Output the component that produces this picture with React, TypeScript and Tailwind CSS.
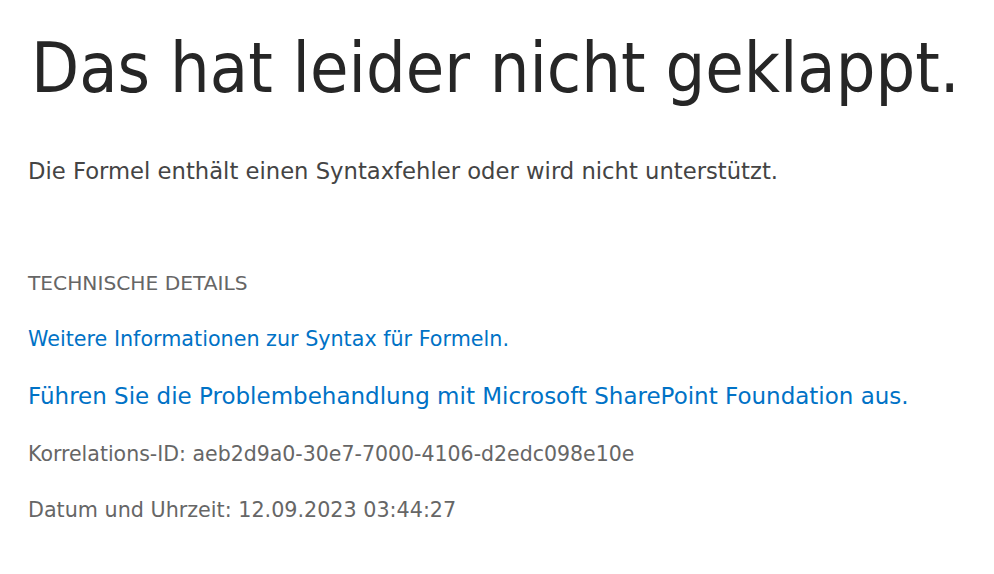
export default function App() {
  return (
    <div
      className="min-h-screen w-full bg-white pl-[28px] pt-[33px]"
      style={{ fontFamily: '"DejaVu Sans", sans-serif' }}
    >
      <h1
        className="ml-[3px] text-[69.6px] leading-[70px] text-[#262626]"
        style={{ fontFamily: '"DejaVu Sans Condensed", "DejaVu Sans", sans-serif' }}
      >
        Das hat leider nicht geklappt.
      </h1>

      <p className="mt-[57px] text-[22.7px] leading-[22px] text-[#444444]">
        Die Formel enthält einen Syntaxfehler oder wird nicht unterstützt.
      </p>

      <div className="mt-[91px] flex flex-col items-start">
        <div className="text-[20.2px] leading-[20px] text-[#666666]">TECHNISCHE DETAILS</div>

        <a href="#" className="mt-[36px] text-[20.7px] leading-[21px] text-[#0072c6]">
          Weitere Informationen zur Syntax für Formeln.
        </a>

        <a href="#" className="mt-[34px] text-[23px] leading-[24px] text-[#0072c6]">
          Führen Sie die Problembehandlung mit Microsoft SharePoint Foundation aus.
        </a>

        <div className="mt-[36px] text-[20.5px] leading-[21px] text-[#666666]">
          Korrelations-ID: aeb2d9a0-30e7-7000-4106-d2edc098e10e
        </div>

        <div className="mt-[35px] text-[20.7px] leading-[21px] text-[#666666]">
          Datum und Uhrzeit: 12.09.2023 03:44:27
        </div>
      </div>
    </div>
  );
}
